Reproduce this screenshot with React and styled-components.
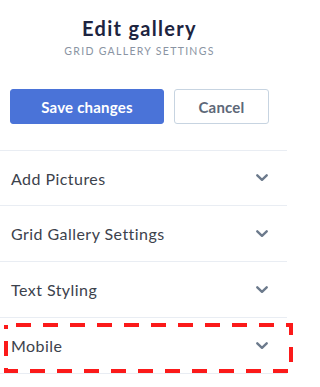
import React from "react";
import styled, { createGlobalStyle } from "styled-components";

const Global = createGlobalStyle`
  html, body { margin: 0; padding: 0; background: #ffffff; }
  body { font-family: Lato, "Open Sans", Arial, sans-serif; -webkit-font-smoothing: antialiased; }
`;

const Panel = styled.div`
  width: 293px;
  height: 387px;
  overflow: hidden;
  background: #fff;
`;

const Header = styled.header`
  width: 259px;
  padding: 16px 0 0 10px;
  display: flex;
  flex-direction: column;
  align-items: center;
`;

const Title = styled.h1`
  margin: 0;
  font-size: 20px;
  line-height: 24px;
  font-weight: 700;
  letter-spacing: 1.3px;
  color: #1d2440;
`;

const Subtitle = styled.div`
  margin-top: 4px;
  font-size: 10.5px;
  line-height: 14px;
  letter-spacing: 1.3px;
  text-transform: uppercase;
  color: #8a94a3;
`;

const Actions = styled.div`
  align-self: stretch;
  display: flex;
  gap: 10px;
  margin-top: 31px;
`;

const Button = styled.button`
  height: 35px;
  width: ${(p) => p.$w}px;
  border-radius: 3px;
  font-family: Lato, "Open Sans", Arial, sans-serif;
  font-size: 15px;
  letter-spacing: 0.2px;
  font-weight: 700;
  cursor: pointer;
  border: 1px solid ${(p) => (p.$primary ? "#4a73d8" : "#c7d4e1")};
  background: ${(p) => (p.$primary ? "#4a73d8" : "#ffffff")};
  color: ${(p) => (p.$primary ? "#ffffff" : "#5d6878")};
`;

const List = styled.ul`
  list-style: none;
  margin: 26px 6px 0 0;
  padding: 0;
`;

const Row = styled.li`
  position: relative;
  height: 55px;
  border-top: 1px solid #e9edf3;
  display: flex;
  align-items: center;
  justify-content: space-between;
  padding: 0 19px 0 11px;
  &:first-child { height: 54px; }
  &:last-child { border-bottom: 1px solid #e9edf3; }
`;

const Label = styled.span`
  font-size: 16px;
  letter-spacing: 0.45px;
  color: #3c424c;
`;

const Highlight = styled.svg`
  position: absolute;
  left: 4px;
  top: 5px;
  overflow: visible;
  pointer-events: none;
`;

const Chevron = () => (
  <svg width="12" height="8" viewBox="0 0 12 8" fill="none">
    <path d="M1.3 1.3 L6 5.8 L10.7 1.3" stroke="#6c7a8c" strokeWidth="2.4" strokeLinecap="round" strokeLinejoin="round" />
  </svg>
);

const DashedFrame = () => (
  <Highlight width="289" height="50" viewBox="0 0 289 50">
    <rect x="2" y="2" width="285" height="46" fill="none" stroke="#fb1a1a" strokeWidth="4" strokeDasharray="15 12" strokeDashoffset="-10" />
  </Highlight>
);

const items = ["Add Pictures", "Grid Gallery Settings", "Text Styling", "Mobile"];

export default function App() {
  return (
    <Panel>
      <Global />
      <Header>
        <Title>Edit gallery</Title>
        <Subtitle>Grid gallery settings</Subtitle>
        <Actions>
          <Button $primary $w={154}>Save changes</Button>
          <Button $w={95}>Cancel</Button>
        </Actions>
      </Header>
      <List>
        {items.map((t, i) => (
          <Row key={t}>
            <Label>{t}</Label>
            <Chevron />
            {i === items.length - 1 && <DashedFrame />}
          </Row>
        ))}
      </List>
    </Panel>
  );
}
